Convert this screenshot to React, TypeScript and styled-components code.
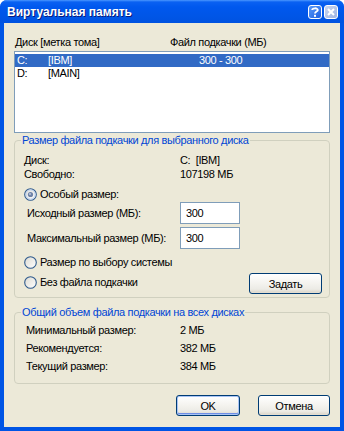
import React from "react";
import styled, { createGlobalStyle } from "styled-components";

const GlobalStyle = createGlobalStyle`
  html, body {
    margin: 0;
    padding: 0;
    width: 344px;
    height: 431px;
    overflow: hidden;
    background: #ffffff;
  }
  body {
    font-family: "Liberation Sans", Arial, sans-serif;
    font-size: 11px;
    letter-spacing: -0.35px;
  }
`;

const Frame = styled.div`
  width: 344px;
  height: 431px;
  display: flex;
  flex-direction: column;
  background: #0055e5;
  border-radius: 7px 7px 0 0;
  overflow: hidden;
`;

const TitleBar = styled.div`
  height: 23px;
  flex: none;
  display: flex;
  align-items: center;
  gap: 2px;
  padding: 0 6px 0 7px;
  background: linear-gradient(#4b97ff 0, #0a61f2 2px, #0058ee 7px, #0055e5 18px, #0052e0 23px);
`;

const Title = styled.div`
  flex: 1;
  color: #ffffff;
  font-weight: bold;
  font-size: 12px;
  letter-spacing: 0;
  padding-top: 1px;
  text-shadow: 1px 1px 0 #0a1c7a;
`;

const CaptionButton = styled.div<{ $disabled?: boolean }>`
  width: 14px;
  height: 14px;
  box-sizing: border-box;
  border: 1px solid #ffffff;
  border-radius: 3px;
  display: flex;
  align-items: center;
  justify-content: center;
  margin-top: 1px;
  background: ${(p) =>
    p.$disabled
      ? "linear-gradient(135deg, #c9d5ef, #9fb4e2)"
      : "linear-gradient(135deg, #5a9af8, #1d5fe3)"};
`;

const Body = styled.div`
  flex: 1;
  margin: 0 4px 4px;
  padding: 13px 10px 0;
  background: #ece9d8;
  display: flex;
  flex-direction: column;
  color: #000000;
`;

const ColumnHeads = styled.div`
  display: grid;
  grid-template-columns: 155px auto;
  height: 13px;
  line-height: 13px;
  padding-left: 1px;
`;

const ListBox = styled.div`
  margin-top: 2px;
  height: 82px;
  box-sizing: border-box;
  border: 1px solid #7f9db9;
  background: #ffffff;
  padding: 2px 0;
`;

const DriveRow = styled.div<{ $selected?: boolean }>`
  display: grid;
  grid-template-columns: 31px 151px auto;
  height: 13px;
  line-height: 13px;
  padding-left: 2px;
  background: ${(p) => (p.$selected ? "#316ac5" : "transparent")};
  color: ${(p) => (p.$selected ? "#ffffff" : "#000000")};
`;

const Group = styled.fieldset<{ $gap: number }>`
  margin: ${(p) => p.$gap}px 0 0;
  padding: 0;
  min-width: 0;
  border: 1px solid #d0d0bf;
  border-radius: 4px;
`;

const Legend = styled.legend`
  margin-left: 6px;
  padding: 0 1px;
  height: 13px;
  line-height: 13px;
  color: #0046d5;
`;

const GroupContent = styled.div<{ $pad: string }>`
  display: flex;
  flex-direction: column;
  padding: ${(p) => p.$pad};
`;

const InfoGrid = styled.div<{ $rowGap: number; $indent: number }>`
  display: grid;
  grid-template-columns: ${(p) => 165 - p.$indent}px auto;
  grid-auto-rows: 13px;
  row-gap: ${(p) => p.$rowGap}px;
  line-height: 13px;
  padding-left: ${(p) => p.$indent}px;
`;

const RadioRow = styled.label<{ $top: number }>`
  display: flex;
  align-items: center;
  gap: 3px;
  height: 13px;
  line-height: 13px;
  margin-top: ${(p) => p.$top}px;
  padding-left: 9px;
`;

const SizeRow = styled.div<{ $top: number }>`
  display: grid;
  grid-template-columns: 153px 60px;
  align-items: center;
  margin-top: ${(p) => p.$top}px;
  padding-left: 12px;
`;

const TextBox = styled.div`
  height: 22px;
  box-sizing: border-box;
  border: 1px solid #7f9db9;
  background: #ffffff;
  padding-left: 5px;
  line-height: 20px;
`;

const ActionRow = styled.div`
  display: flex;
  align-items: flex-start;
  justify-content: space-between;
  margin-top: 4px;
  height: 21px;
`;

const PushButton = styled.button<{ $w: number; $default?: boolean }>`
  width: ${(p) => p.$w}px;
  height: 21px;
  box-sizing: border-box;
  padding: 0;
  border: 1px solid #003c74;
  border-radius: 3px;
  background: linear-gradient(#ffffff 0%, #f5f4f0 45%, #ecebe5 80%, #d8d2c6 100%);
  box-shadow: ${(p) =>
    p.$default
      ? "inset 0 0 0 1px #a9c4f5, inset 0 -1px 0 1px #6f8fe6"
      : "inset 0 -1px 0 0 #e3ddd0"};
  font-family: "Liberation Sans", Arial, sans-serif;
  font-size: 11px;
  letter-spacing: -0.35px;
  color: #000000;
`;

const ButtonBar = styled.div`
  display: flex;
  justify-content: flex-end;
  gap: 18px;
  margin-top: 11px;
`;

const Radio = ({ checked }: { checked?: boolean }) => (
  <svg width="13" height="13" viewBox="0 0 13 13">
    <defs>
      <linearGradient id={checked ? "rg1" : "rg0"} x1="0" y1="0" x2="1" y2="1">
        <stop offset="0" stopColor="#dcdad2" />
        <stop offset="1" stopColor="#ffffff" />
      </linearGradient>
    </defs>
    <circle
      cx="6.5"
      cy="6.5"
      r="5.8"
      fill={`url(#${checked ? "rg1" : "rg0"})`}
      stroke="#2f5a8c"
      strokeWidth="1.1"
    />
    {checked && (
      <>
        <circle cx="6.5" cy="6.5" r="4.6" fill="none" stroke="#b9d1f5" strokeWidth="1" />
        <circle cx="6.5" cy="6.5" r="2.6" fill="#6f83a8" />
        <circle cx="6" cy="6" r="1" fill="#b8c6de" />
      </>
    )}
  </svg>
);

export default function App() {
  return (
    <>
      <GlobalStyle />
      <Frame>
        <TitleBar>
          <Title>Виртуальная память</Title>
          <CaptionButton>
            <svg width="8" height="10" viewBox="0 0 8 10">
              <path
                d="M1.2 3 C1.2 0.8 6.8 0.6 6.8 3 C6.8 4.6 4 4.6 4 6.6"
                fill="none"
                stroke="#ffffff"
                strokeWidth="1.8"
              />
              <rect x="3" y="7.8" width="2" height="2" fill="#ffffff" />
            </svg>
          </CaptionButton>
          <CaptionButton $disabled>
            <svg width="8" height="8" viewBox="0 0 8 8">
              <path d="M1 1 L7 7 M7 1 L1 7" stroke="#ffffff" strokeWidth="2" />
            </svg>
          </CaptionButton>
        </TitleBar>
        <Body>
          <ColumnHeads>
            <span>Диск [метка тома]</span>
            <span>Файл подкачки (МБ)</span>
          </ColumnHeads>
          <ListBox>
            <DriveRow $selected>
              <span>C:</span>
              <span>[IBM]</span>
              <span>300 - 300</span>
            </DriveRow>
            <DriveRow>
              <span>D:</span>
              <span>[MAIN]</span>
              <span />
            </DriveRow>
          </ListBox>

          <Group $gap={1}>
            <Legend>Размер файла подкачки для выбранного диска</Legend>
            <GroupContent $pad="7px 7px 3px 0">
              <InfoGrid $rowGap={1} $indent={9}>
                <span>Диск:</span>
                <span>C:&nbsp;&nbsp;[IBM]</span>
                <span>Свободно:</span>
                <span>107198 МБ</span>
              </InfoGrid>
              <RadioRow $top={7}>
                <Radio checked />
                Особый размер:
              </RadioRow>
              <SizeRow $top={1}>
                <span>Исходный размер (МБ):</span>
                <TextBox>300</TextBox>
              </SizeRow>
              <SizeRow $top={3}>
                <span>Максимальный размер (МБ):</span>
                <TextBox>300</TextBox>
              </SizeRow>
              <RadioRow $top={7}>
                <Radio />
                Размер по выбору системы
              </RadioRow>
              <ActionRow>
                <RadioRow $top={3}>
                  <Radio />
                  Без файла подкачки
                </RadioRow>
                <PushButton $w={73}>Задать</PushButton>
              </ActionRow>
            </GroupContent>
          </Group>

          <Group $gap={8}>
            <Legend>Общий объем файла подкачки на всех дисках</Legend>
            <GroupContent $pad="5px 0 10px 0">
              <InfoGrid $rowGap={5} $indent={11}>
                <span>Минимальный размер:</span>
                <span>2 МБ</span>
                <span>Рекомендуется:</span>
                <span>382 МБ</span>
                <span>Текущий размер:</span>
                <span>384 МБ</span>
              </InfoGrid>
            </GroupContent>
          </Group>

          <ButtonBar>
            <PushButton $w={64} $default>
              OK
            </PushButton>
            <PushButton $w={72}>Отмена</PushButton>
          </ButtonBar>
        </Body>
      </Frame>
    </>
  );
}
